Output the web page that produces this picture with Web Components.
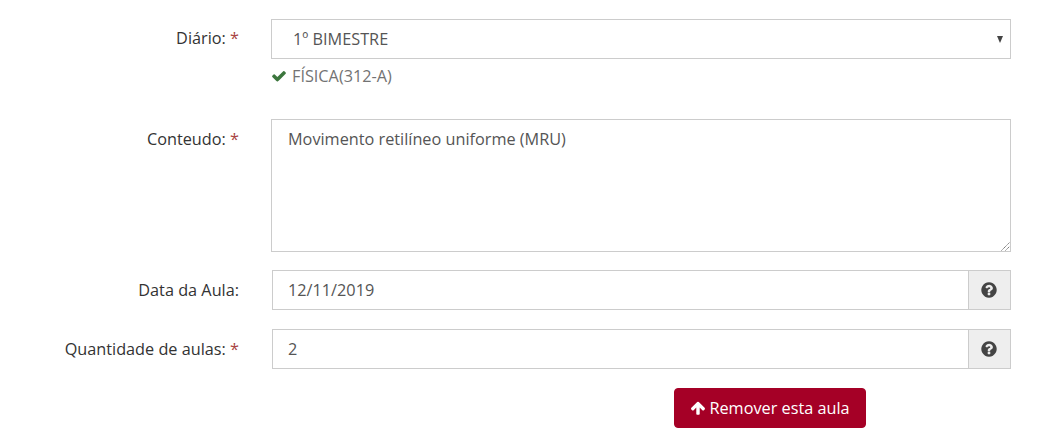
<!DOCTYPE html>
<html lang="pt"><head><meta charset="utf-8"><title>Aula</title>
<style>
html,body{margin:0;padding:0;background:#fff}
body{font:16.25px/24px "Open Sans",sans-serif;color:#333;height:448px;overflow:hidden}
</style></head><body>
<aula-form>
  <form-row label="Diário:" required style="margin-top:19px">
    <select-box>1º BIMESTRE</select-box>
    <help-text>FÍSICA(312-A)</help-text>
  </form-row>
  <form-row label="Conteudo:" required nudge-label style="margin-top:31px">
    <text-area>Movimento retilíneo uniforme (MRU)</text-area>
  </form-row>
  <form-row label="Data da Aula:" style="margin-top:18px" nudge>
    <addon-input>12/11/2019</addon-input>
  </form-row>
  <form-row label="Quantidade de aulas:" required style="margin-top:19px" nudge>
    <addon-input>2</addon-input>
  </form-row>
  <action-bar>Remover esta aula</action-bar>
</aula-form>
<script>
const Q='M1024 1376v-192q0-14-9-23t-23-9h-192q-14 0-23 9t-9 23v192q0 14 9 23t23 9h192q14 0 23-9t9-23zm256-672q0-88-55.5-163t-138.5-116-170-41q-243 0-371 213-15 24 8 42l132 100q7 6 19 6 16 0 25-12 53-68 86-92 34-24 86-24 48 0 85.5 26t37.5 59q0 38-20 61t-68 45q-63 28-115.5 86.5t-52.5 125.5v36q0 14 9 23t23 9h192q14 0 23-9t9-23q0-19 21.5-49.5t54.5-49.5q32-18 49-28.5t46-35 44.5-48 28-60.5 12.5-81zm384 192q0 209-103 385.5t-279.5 279.5-385.5 103-385.5-103-279.5-279.5-103-385.5 103-385.5 279.5-279.5 385.5-103 385.5 103 279.5 279.5 103 385.5z';
const C='M1671 566q0 40-28 68l-724 724-136 136q-28 28-68 28t-68-28l-136-136-362-362q-28-28-28-68t28-68l136-136q28-28 68-28t68 28l294 295 656-657q28-28 68-28t68 28l136 136q28 28 28 68z';
const A='M1675 971q0 51-37 90l-75 75q-38 38-91 38-54 0-90-38l-294-293v704q0 52-37.5 84.5t-90.5 32.5h-128q-53 0-90.5-32.5t-37.5-84.5v-704l-294 293q-36 38-90 38t-90-38l-75-75q-38-38-38-90 0-53 38-91l651-651q35-37 90-37 54 0 91 37l651 651q37 39 37 91z';
const icon=(d,s,c)=>`<svg width="${s}" height="${s}" viewBox="0 0 1792 1792" fill="${c}" aria-hidden="true"><path d="${d}"/></svg>`;
function def(name,html,setup){
  customElements.define(name,class extends HTMLElement{
    constructor(){super();this.attachShadow({mode:'open'}).innerHTML=html;}
    connectedCallback(){setup&&setup(this);}
  });
}
def('aula-form',`<style>:host{display:block;width:1011px}</style><slot></slot>`);
def('form-row',`<style>
:host{display:flex;align-items:flex-start}
.l{width:239px;flex:none;text-align:right;padding-top:7px;color:#333;line-height:24px}
.r{color:#a94442}
.c{margin-left:32px;flex:1;min-width:0}
:host([nudge]) .c{margin-left:33px}
:host([nudge]) .l,:host([nudge-label]) .l{padding-top:8px}
</style><div class="l"><span id="t"></span></div><div class="c"><slot></slot></div>`,el=>{
  el.shadowRoot.getElementById('t').innerHTML=el.getAttribute('label')+(el.hasAttribute('required')?' <span class="r">*</span>':'');
});
def('select-box',`<style>
:host{display:flex;align-items:center;justify-content:space-between;box-sizing:border-box;height:40px;border:1px solid #ccc;background:#fff;color:#555;padding:0 7px 0 21px}
i{width:0;height:0;border:3.5px solid transparent;border-top:7px solid #444;border-bottom:0}
</style><span><slot></slot></span><i></i>`);
def('help-text',`<style>
:host{display:flex;align-items:center;gap:5px;margin-top:5px;color:#737373;height:24px}
svg{display:block}
</style>${icon(C,16,'#3c763d')}<span><slot></slot></span>`);
def('text-area',`<style>
:host{display:block;position:relative;box-sizing:border-box;height:133px;border:1px solid #ccc;background:#fff;color:#555;padding:7px 16px}
svg{position:absolute;right:0;bottom:0}
</style><slot></slot><svg width="10" height="10" viewBox="0 0 10 10" stroke="#666" stroke-width="1" fill="none"><path d="M1.5 9.5 9.5 1.5M5.5 9.5 9.5 5.5" stroke-dasharray="1.2 .6"/></svg>`);
def('addon-input',`<style>
:host{display:flex;height:40px;box-sizing:border-box;border:1px solid #ccc;background:#fff;color:#555}
.v{flex:1;padding:0 15px;line-height:38px}
.a{width:42px;flex:none;box-sizing:border-box;border-left:1px solid #ccc;background:#eee;display:flex;align-items:center;justify-content:center;padding-right:1px}
svg{display:block}
</style><div class="v"><slot></slot></div><div class="a">${icon(Q,18,'#444')}</div>`);
def('action-bar',`<style>
:host{display:flex;margin:19px 0 0 674px}
button{display:flex;align-items:center;gap:3px;box-sizing:border-box;width:192px;height:40px;justify-content:center;border:1px solid #a50026;border-radius:4px;background:#a50026;color:#fff;font:inherit;padding:0;white-space:nowrap}
svg{display:block}
</style><button type="button">${icon(A,16,'#fff')}<span><slot></slot></span></button>`);
</script>
</body></html>
